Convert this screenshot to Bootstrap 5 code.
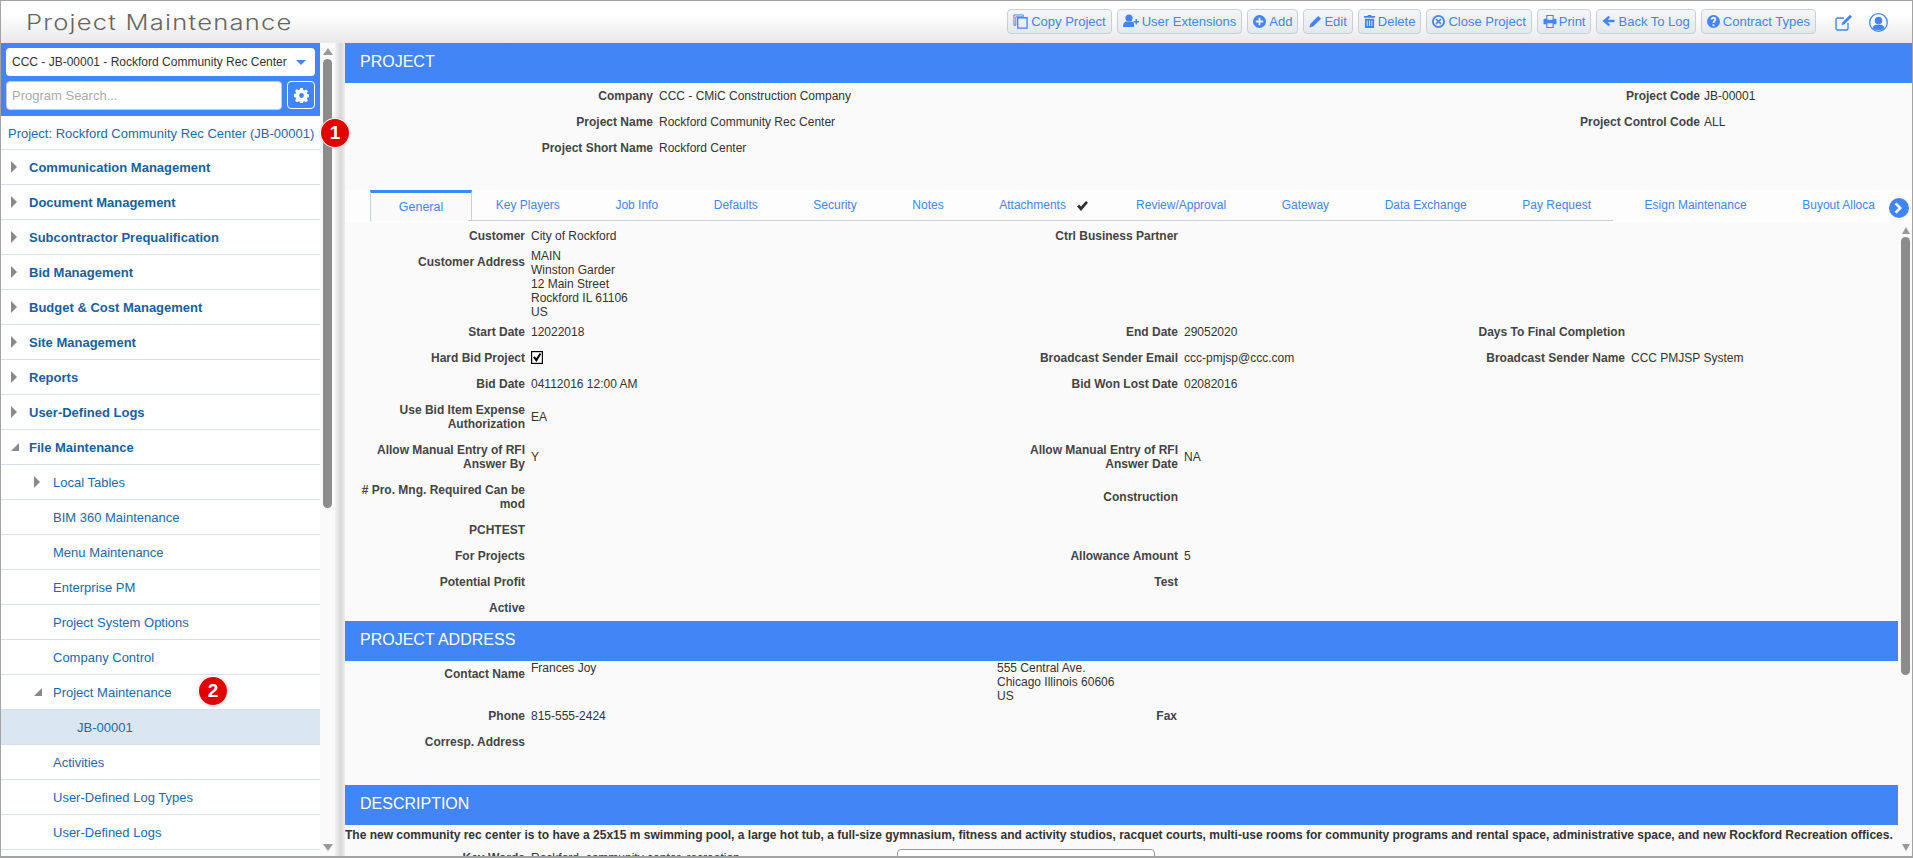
<!DOCTYPE html>
<html lang="en"><head><meta charset="utf-8"><title>Project Maintenance</title>
<link rel="stylesheet" href="https://cdn.jsdelivr.net/npm/bootstrap@5.3.0/dist/css/bootstrap.min.css">
<style>
html,body{height:100%;overflow:hidden;margin:0}
body{font-family:"Liberation Sans",Arial,sans-serif;font-size:12px;color:#333;background:#fafafa}
.app-frame{height:858px;width:1913px;border:1px solid #a3a3a3;border-bottom-width:2px;display:flex;flex-direction:column;overflow:hidden}
.top-head{height:42px;flex:none;background:linear-gradient(#fff 30%,#e9e9e9);padding:0 24px 0 25px;display:flex;align-items:center;justify-content:space-between}
.app-title{font-family:"Inter",sans-serif;font-weight:300;font-size:21px;letter-spacing:1px;color:#666;margin:0;line-height:42px;transform:translateY(1px) scaleX(1.217);transform-origin:left center}
.tool-btn{height:25px;padding:0 5px;font-size:13px;line-height:23px;color:#4285f6;background:linear-gradient(#f4f6f8,#e4e8ec);border:1px solid #c5d0da;border-radius:4px;display:inline-flex;align-items:center;gap:3px;white-space:nowrap}
.tool-btn.tight{gap:2px}
.tool-btn svg{fill:#4285f6;flex:none}
.tool-set{gap:5px;margin-top:-2px}
.hd-icon1{margin-left:19px}
.hd-icon2{margin-left:16px}
.body-split{flex:1;display:flex;min-height:0}
.side-col{width:334px;flex:none;display:flex;background:#fff}
.side-inner{width:319px;flex:none;display:flex;flex-direction:column;overflow:hidden}
.side-top{background:#4285f6;height:73px;padding:5px 5px 0 5px;flex:none}
.sel-box{height:28px;background:#fff;border-radius:4px;font-size:12px;color:#333;padding:0 5px 0 6px;display:flex;align-items:center;justify-content:space-between;white-space:nowrap}
.sel-caret{width:0;height:0;border:5px solid transparent;border-top:5px solid #4285f6;border-bottom:0;margin-right:4px}
.search-line{display:flex;gap:5px;margin-top:5px}
.search-box{width:276px;height:29px;border-radius:4px;border:1px solid #ccc;font-size:13px;padding:0 5px;background:#fff}
.search-box::placeholder{color:#aaa;opacity:1}
.gear-btn{width:28px;height:28px;border:1px solid #fff;border-radius:4px;background:#4285f6;display:flex;align-items:center;justify-content:center;padding:0}
.menu-row{height:35px;flex:none;border-bottom:1px solid #d9e0e6;display:flex;align-items:center;font-size:13px;color:#1a69ad;white-space:nowrap;background:#fff;position:relative;border-radius:0;padding-top:2px}
.menu-row.prj{padding-left:7px;height:34px}
.menu-row.lvl0{font-weight:700;padding-left:28px;color:#17609f}
.menu-row.lvl1{padding-left:52px}
.menu-row.lvl2{padding-left:76px;background:#dae7f3}
.tri-r{position:absolute;top:11px;width:0;height:0;border:6px solid transparent;border-left:6px solid #8a8a8a;border-right:0}
.tri-d{position:absolute;top:13px;width:0;height:0;border-bottom:8px solid #8a8a8a;border-left:8px solid transparent}
.lvl0>.tri-r{left:10px}.lvl0>.tri-d{left:10px}
.lvl1>.tri-r{left:33px}.lvl1>.tri-d{left:33px}
.note-dot{position:absolute;width:28px;height:28px;border-radius:50%;background:#e30000;color:#fff;font-weight:700;font-size:19px;line-height:28px;text-align:center;box-shadow:0 0 0 1px #fff,0 0 3px #888;z-index:3}
.sbar{width:15px;flex:none;background:#fafafa;position:relative;display:flex;flex-direction:column;align-items:center;padding-top:5px}
.up-a{width:0;height:0;border:5px solid transparent;border-bottom:7px solid #999;border-top:0;flex:none}
.dn-a{width:0;height:0;border:5px solid transparent;border-top:7px solid #999;border-bottom:0;flex:none;position:absolute;bottom:5px}
.sbar-thumb{width:9px;background:#8c8c8c;border-radius:5px;flex:none;margin-top:4px}
.splitter{width:10px;flex:none;background:linear-gradient(90deg,#f2f2f2,#d8d8d8 55%,#ececec)}
.main-col{flex:1;min-width:0;display:flex;flex-direction:column;background:#fafafa}
.band{height:40px;flex:none;background:#4285f6;color:#fff;font-size:16px;line-height:38px;padding-left:15px}
.hdr-form{display:grid;grid-template-columns:308px 835px 200px 1fr;column-gap:6px;grid-auto-rows:26px;align-content:start;height:107px;flex:none}
.hdr-form .v2{margin-left:-2px}
.lab{font-weight:700;color:#444;text-align:right;line-height:14px;padding:6px 0}
.val{color:#333;line-height:14px;padding:6px 0}
.val.flush{padding:0}
.val.mid{align-self:center;padding:0}
.tab-line{height:33px;flex:none;display:flex;align-items:flex-start;padding-left:25px;position:relative;background:#fdfdfd}
.tab-strip{flex-wrap:nowrap;overflow:hidden;border:0;width:1512px;height:31px}
.tab-strip .nav-link{height:31px;border:0;border-bottom:1px solid #c5d0da;border-radius:0;padding:7px 27.8px 0;font-size:12px;line-height:16px;color:#4285f6;white-space:nowrap;margin:0;background:none}
.tab-strip .first-tab{margin-right:-4px}
.tab-strip .nav-link.active{border:1px solid #c5d0da;border-top:3px solid #4285f6;border-bottom:0;background:#fafafa;color:#4285f6;font-weight:400;padding:6px 0 0;text-align:center;font-size:12.5px;width:102px}
.tab-strip .nav-link.noline{border-bottom:0}
.tab-strip .nav-link.att{padding-right:20px}
.tab-strip .nav-link.pay{padding-right:22px}
.tab-strip .nav-link.esign{padding-left:31.500px}
.tab-next{position:absolute;left:1544px;top:8px;width:20px;height:20px}
.scroll-zone{flex:1;min-height:0;display:flex;overflow:hidden}
.scroll-body{flex:1;min-width:0;overflow:hidden}
.sbar.main-bar{width:13px;padding-top:4px;background:#fafafa;margin-left:1px}
.sbar.main-bar .sbar-thumb{margin-top:3px}
.up-a.sm,.dn-a.sm{border-left-width:4px;border-right-width:4px}
.form-grid{display:grid;grid-template-columns:180px 451px 190px 216px 219px 1fr;column-gap:6px}
.addr-grid{display:grid;grid-template-columns:180px 460px 180px 1fr;column-gap:6px;grid-auto-rows:min-content;align-content:start;height:124px}
.addr-lab2{grid-column:3}
.desc-text{font-weight:700;font-size:12px;line-height:20px;white-space:nowrap;padding:0;color:#333;margin:0}
.kw-row{display:flex}
.kw-row .lab{width:180px}.kw-row .val{margin-left:6px;width:366px}
.kw-box{width:258px;height:40px;margin-top:4px;background:#fff;border:1px solid #999;border-radius:4px}
.chk-box{display:block;margin-top:0}
</style></head><body>
<div class="app-frame">
<header class="top-head">
<h1 class="app-title">Project Maintenance</h1>
<div class="d-flex align-items-center">
<div class="d-flex tool-set">
<button class="tool-btn" type="button"><svg width="15" height="15" viewBox="0 0 16 16"><path d="M1 1h10v2H3v9H1z" fill="none" stroke="#4285f6" stroke-width="1"/><path d="M5 4h10v11H5z" fill="none" stroke="#4285f6" stroke-width="1.4"/></svg>Copy Project</button>
<button class="tool-btn" type="button"><svg width="16" height="14" viewBox="0 0 16 14"><circle cx="6" cy="4" r="3.6"/><path d="M0 13c0-4 2-5.500 3.500-5.500h5C10 7.500 11 9 11 10v3z"/><path d="M10.500 7h2V5h1.500v2h2v1.500h-2v2h-1.500v-2h-2z"/></svg>User Extensions</button>
<button class="tool-btn" type="button"><svg width="13" height="13" viewBox="0 0 14 14"><path fill-rule="evenodd" d="M7 0a7 7 0 1 1 0 14A7 7 0 0 1 7 0zM6 3v3H3v2h3v3h2V8h3V6H8V3z"/></svg>Add</button>
<button class="tool-btn tight" type="button"><svg width="13" height="13" viewBox="0 0 14 14"><path d="M10 1l3 3-8.500 8.500L.5 13.500l1-4zM2.500 10l1.500 1.500"/></svg>Edit</button>
<button class="tool-btn" type="button"><svg width="11" height="13" viewBox="0 0 12 14"><path d="M4 0h4v1h4v2H0V1h4zM1 4h10v10H1zM3 6v6h1V6zm2.500 0v6h1V6zM8 6v6h1V6z" fill-rule="evenodd"/></svg>Delete</button>
<button class="tool-btn" type="button"><svg width="13" height="13" viewBox="0 0 14 14"><path fill-rule="evenodd" d="M7 0a7 7 0 1 1 0 14A7 7 0 0 1 7 0zm0 2a5 5 0 1 0 0 10A5 5 0 0 0 7 2z"/><path d="M5 3.800l2 2 2-2L10.200 5l-2 2 2 2L9 10.200l-2-2-2 2L3.800 9l2-2-2-2z"/></svg>Close Project</button>
<button class="tool-btn tight" type="button"><svg width="14" height="13" viewBox="0 0 14 14"><path fill-rule="evenodd" d="M3 0h8v4h2a1 1 0 0 1 1 1v5h-3v4H3v-4H0V5a1 1 0 0 1 1-1h2zm1.200 1.200V5h5.600V1.200zM4.200 9v3.800h5.600V9z"/></svg>Print</button>
<button class="tool-btn" type="button"><svg width="13" height="12" viewBox="0 0 14 14"><path d="M7 1l1.800 1.800L6 5.600h8v2.800H6l2.800 2.800L7 13 0 7z"/></svg>Back To Log</button>
<button class="tool-btn" type="button"><svg width="13" height="13" viewBox="0 0 14 14"><path fill-rule="evenodd" d="M7 0a7 7 0 1 1 0 14A7 7 0 0 1 7 0zM6 10v2h2v-2zM7 2C5.200 2 4 3 4 4.800h2C6 4.200 6.400 4 7 4s1 .3 1 .8c0 1-2 1.200-2 3.700h2c0-1.800 2-2 2-4C10 3 8.800 2 7 2z"/></svg>Contract Types</button>
</div>
<svg class="hd-icon1" width="18" height="17" viewBox="0 0 18 17" fill="none" stroke="#4285f6" stroke-width="1.400"><path d="M13 9v5.500a1.500 1.500 0 0 1-1.500 1.500h-9A1.500 1.500 0 0 1 1 14.500v-9A1.500 1.500 0 0 1 2.500 4H9"/><path d="M15 .8l2 2-7.500 7.500-3 1 1-3z" fill="#4285f6" stroke="none"/></svg>
<svg class="hd-icon2" width="19" height="19" viewBox="0 0 19 19"><circle cx="9.500" cy="9.500" r="8.800" fill="none" stroke="#4285f6" stroke-width="1.300"/><circle cx="9.500" cy="7.500" r="3.800" fill="#4285f6"/><path d="M3.500 15c.5-2.500 2.500-3.500 6-3.500s5.500 1 6 3.500c-3 3-9 3-12 0z" fill="#4285f6"/></svg>
</div>
</header>
<div class="body-split">
<aside class="side-col">
<div class="side-inner">
<div class="side-top">
<div class="sel-box"><span>CCC - JB-00001 - Rockford Community Rec Center</span><span class="sel-caret"></span></div>
<div class="search-line"><input class="search-box" type="text" placeholder="Program Search..."><button class="gear-btn" type="button" aria-label="Settings"><svg width="15" height="15" viewBox="0 0 16 16"><path fill="#fff" fill-rule="evenodd" d="M6.600 0h2.800l.4 2.100 1.300.6 1.800-1.200 2 2-1.200 1.800.6 1.300 2.100.4v2.800l-2.100.4-.6 1.300 1.200 1.800-2 2-1.800-1.200-1.300.6-.4 2.100H6.600l-.4-2.100-1.300-.6-1.800 1.200-2-2 1.200-1.800-.6-1.300L-.4 9.400V6.600l2.100-.4.6-1.300-1.200-1.800 2-2 1.800 1.200 1.300-.6zM8 5.400a2.600 2.600 0 1 0 0 5.200 2.600 2.600 0 0 0 0-5.200z"/></svg></button></div>
</div>
<div class="menu-row prj">Project: Rockford Community Rec Center (JB-00001)</div>
<div class="menu-row lvl0"><i class="tri-r"></i>Communication Management</div>
<div class="menu-row lvl0"><i class="tri-r"></i>Document Management</div>
<div class="menu-row lvl0"><i class="tri-r"></i>Subcontractor Prequalification</div>
<div class="menu-row lvl0"><i class="tri-r"></i>Bid Management</div>
<div class="menu-row lvl0"><i class="tri-r"></i>Budget &amp; Cost Management</div>
<div class="menu-row lvl0"><i class="tri-r"></i>Site Management</div>
<div class="menu-row lvl0"><i class="tri-r"></i>Reports</div>
<div class="menu-row lvl0"><i class="tri-r"></i>User-Defined Logs</div>
<div class="menu-row lvl0"><i class="tri-d"></i>File Maintenance</div>
<div class="menu-row lvl1"><i class="tri-r"></i>Local Tables</div>
<div class="menu-row lvl1">BIM 360 Maintenance</div>
<div class="menu-row lvl1">Menu Maintenance</div>
<div class="menu-row lvl1">Enterprise PM</div>
<div class="menu-row lvl1">Project System Options</div>
<div class="menu-row lvl1">Company Control</div>
<div class="menu-row lvl1"><i class="tri-d"></i>Project Maintenance<span class="note-dot" style="left:198px;top:2px">2</span></div>
<div class="menu-row lvl2">JB-00001</div>
<div class="menu-row lvl1">Activities</div>
<div class="menu-row lvl1">User-Defined Log Types</div>
<div class="menu-row lvl1">User-Defined Logs</div>
</div>
<div class="sbar"><i class="up-a"></i><div class="sbar-thumb" style="height:449px"></div><i class="dn-a"></i></div>
</aside>
<div class="splitter"></div>
<span class="note-dot" style="left:321px;top:119px">1</span>
<main class="main-col">
<div class="band">PROJECT</div>
<div class="hdr-form">
<div class="lab">Company</div><div class="val">CCC - CMiC Construction Company</div><div class="lab">Project Code</div><div class="val v2">JB-00001</div>
<div class="lab">Project Name</div><div class="val">Rockford Community Rec Center</div><div class="lab">Project Control Code</div><div class="val v2">ALL</div>
<div class="lab">Project Short Name</div><div class="val">Rockford Center</div><div></div><div></div>
</div>
<div class="tab-line">
<ul class="nav nav-tabs tab-strip">
<li class="nav-item first-tab"><a class="nav-link active" href="#">General</a></li>
<li class="nav-item"><a class="nav-link" href="#">Key Players</a></li>
<li class="nav-item"><a class="nav-link" href="#">Job Info</a></li>
<li class="nav-item"><a class="nav-link" href="#">Defaults</a></li>
<li class="nav-item"><a class="nav-link" href="#">Security</a></li>
<li class="nav-item"><a class="nav-link" href="#">Notes</a></li>
<li class="nav-item"><a class="nav-link att" href="#">Attachments <svg class="ms-2" width="11" height="10" viewBox="0 0 11 10"><path d="M0 5.500L2 3.500l2 2L9 0l2 1.800L4 10z" fill="#333"/></svg></a></li>
<li class="nav-item"><a class="nav-link" href="#">Review/Approval</a></li>
<li class="nav-item"><a class="nav-link" href="#">Gateway</a></li>
<li class="nav-item"><a class="nav-link" href="#">Data Exchange</a></li>
<li class="nav-item"><a class="nav-link pay" href="#">Pay Request</a></li>
<li class="nav-item"><a class="nav-link noline esign" href="#">Esign Maintenance</a></li>
<li class="nav-item"><a class="nav-link noline" href="#">Buyout Alloca</a></li>
</ul>
<svg class="tab-next" viewBox="0 0 20 20"><circle cx="10" cy="10" r="10" fill="#4285f6"/><path d="M7.500 4.500L13 10l-5.500 5.500-1.800-1.800L9.400 10 5.700 6.300z" fill="#fff"/></svg>
</div>
<div class="scroll-zone">
<div class="scroll-body">
<div class="form-grid">
<div class="lab">Customer</div><div class="val">City of Rockford</div><div class="lab">Ctrl Business Partner</div><div class="val"></div><div></div><div></div>
<div class="lab">Customer Address</div><div class="val flush">MAIN<br>Winston Garder<br>12 Main Street<br>Rockford IL 61106<br>US</div><div></div><div></div><div></div><div></div>
<div class="lab">Start Date</div><div class="val">12022018</div><div class="lab">End Date</div><div class="val">29052020</div><div class="lab">Days To Final Completion</div><div class="val"></div>
<div class="lab">Hard Bid Project</div><div class="val"><svg class="chk-box" width="12" height="13" viewBox="0 0 12 13"><rect x=".6" y=".6" width="10.800" height="11.800" fill="#fff" stroke="#000" stroke-width="1.200"/><path d="M2 6.500l1.800-1.200 1.400 2L8.800 2l1.400 1L5.500 11z" fill="#000"/></svg></div><div class="lab">Broadcast Sender Email</div><div class="val">ccc-pmjsp@ccc.com</div><div class="lab">Broadcast Sender Name</div><div class="val">CCC PMJSP System</div>
<div class="lab">Bid Date</div><div class="val">04112016 12:00 AM</div><div class="lab">Bid Won Lost Date</div><div class="val">02082016</div><div></div><div></div>
<div class="lab">Use Bid Item Expense Authorization</div><div class="val mid">EA</div><div></div><div></div><div></div><div></div>
<div class="lab">Allow Manual Entry of RFI Answer By</div><div class="val mid">Y</div><div class="lab">Allow Manual Entry of RFI Answer Date</div><div class="val mid">NA</div><div></div><div></div>
<div class="lab"># Pro. Mng. Required Can be mod</div><div class="val"></div><div class="lab align-self-center">Construction</div><div class="val"></div><div></div><div></div>
<div class="lab">PCHTEST</div><div class="val"></div><div></div><div></div><div></div><div></div>
<div class="lab">For Projects</div><div class="val"></div><div class="lab">Allowance Amount</div><div class="val">5</div><div></div><div></div>
<div class="lab">Potential Profit</div><div class="val"></div><div class="lab">Test</div><div class="val"></div><div></div><div></div>
<div class="lab">Active</div><div class="val"></div><div></div><div></div><div></div><div></div>
</div>
<div class="band">PROJECT ADDRESS</div>
<div class="addr-grid">
<div class="lab">Contact Name</div><div class="val flush">Frances Joy</div><div class="val flush" style="grid-column:3/5">555 Central Ave.<br>Chicago Illinois 60606<br>US</div>
<div class="lab">Phone</div><div class="val">815-555-2424</div><div class="lab addr-lab2">Fax</div><div class="val"></div>
<div class="lab">Corresp. Address</div><div class="val"></div><div></div><div></div>
</div>
<div class="band">DESCRIPTION</div>
<p class="desc-text">The new community rec center is to have a 25x15 m swimming pool, a large hot tub, a full-size gymnasium, fitness and activity studios, racquet courts, multi-use rooms for community programs and rental space, administrative space, and new Rockford Recreation offices.</p>
<div class="kw-row"><div class="lab">Key Words</div><div class="val">Rockford, community center, recreation</div><div class="kw-box"></div></div>
</div>
<div class="sbar main-bar"><i class="up-a sm"></i><div class="sbar-thumb" style="height:438px"></div><i class="dn-a sm"></i></div>
</div>
</main>
</div>
</div>
</body></html>
